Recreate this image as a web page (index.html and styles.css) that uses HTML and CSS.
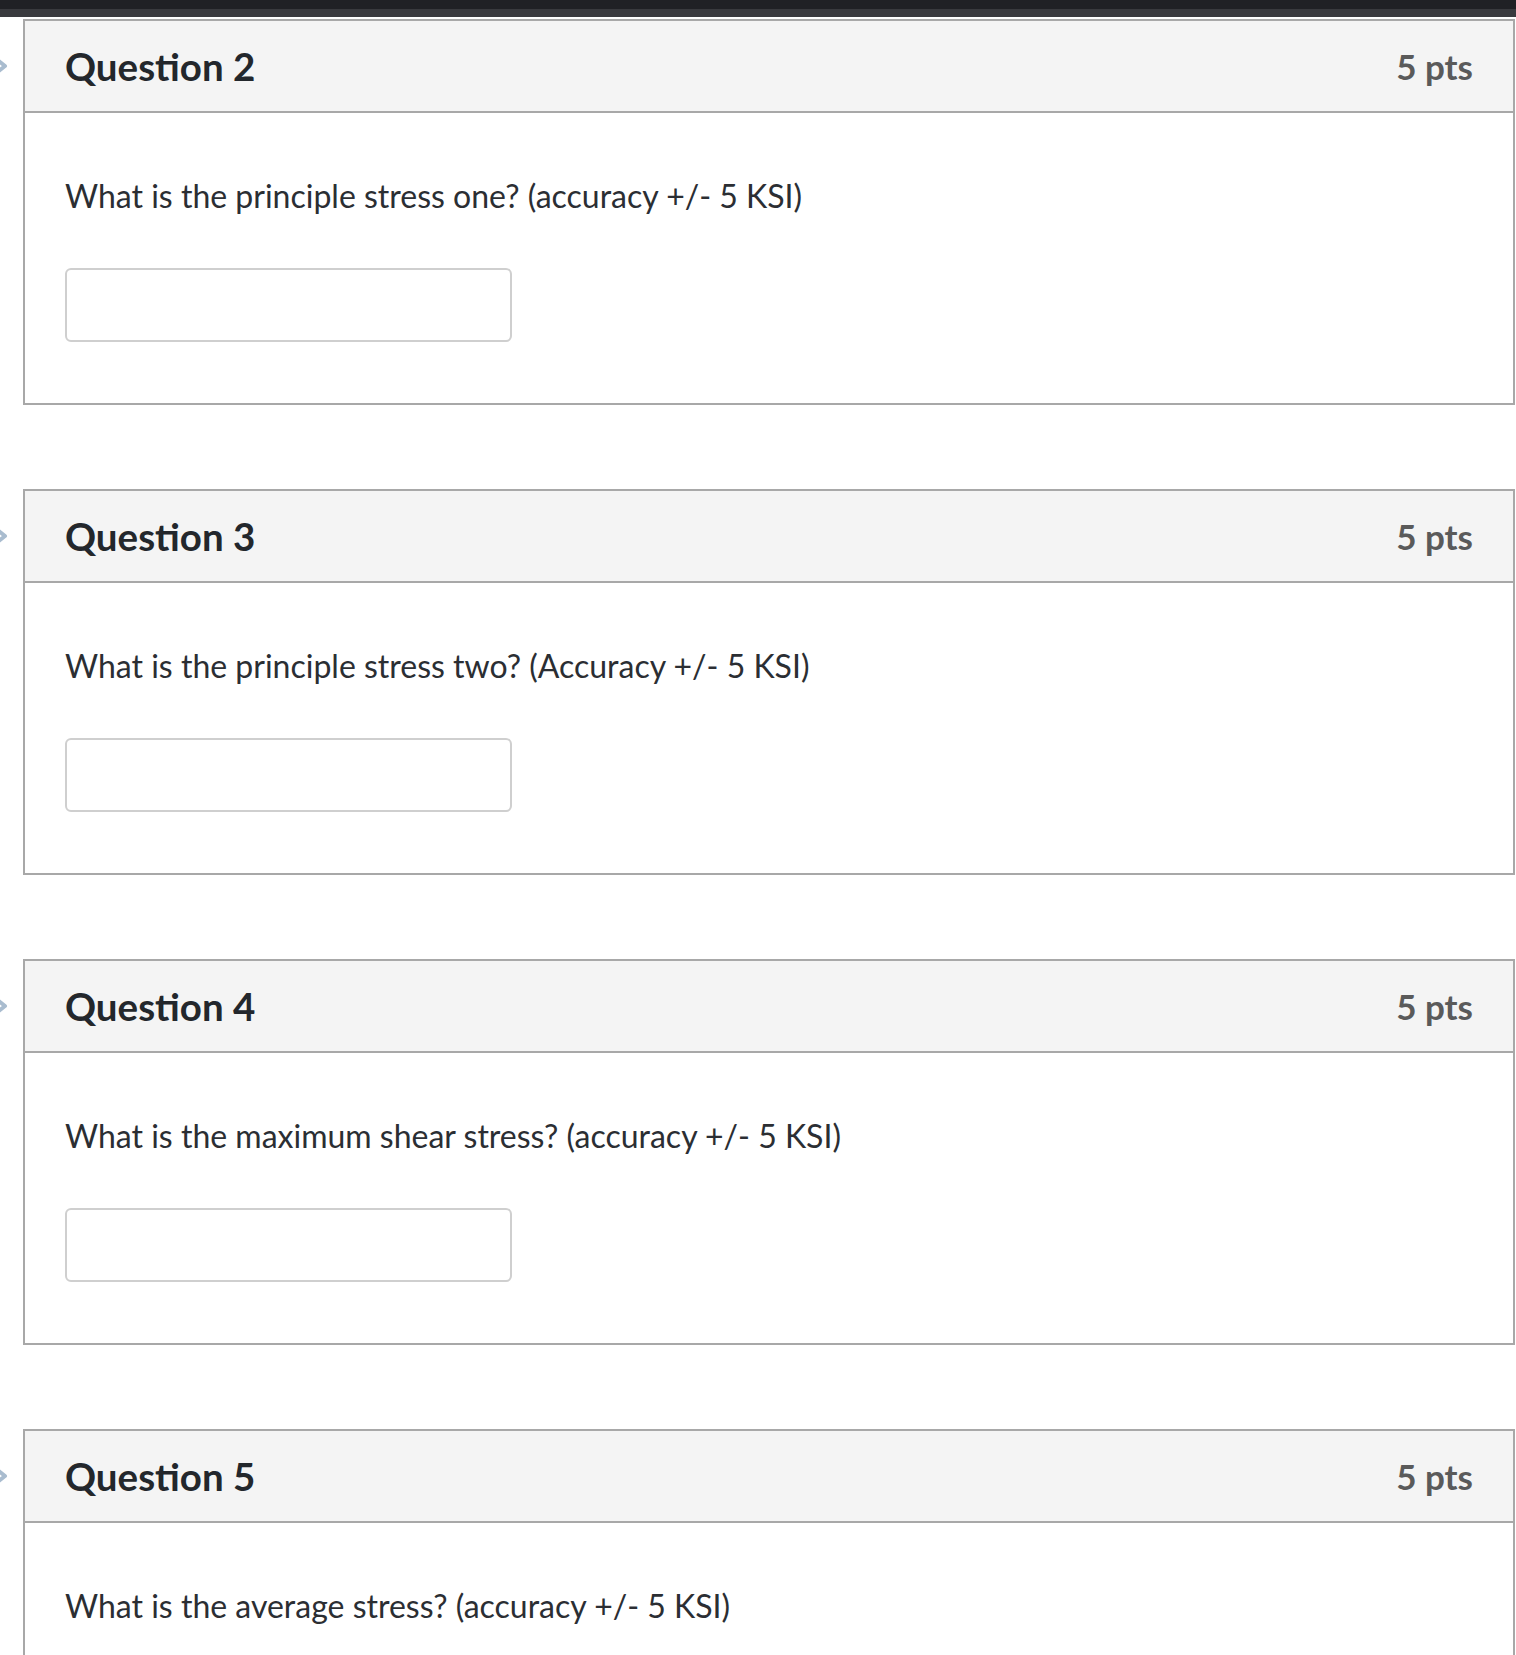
FILE: index.html
```html
<!DOCTYPE html>
<html lang="en">
<head>
<meta charset="utf-8">
<title>Quiz</title>
<link rel="stylesheet" href="styles.css">
</head>
<body>
<div class="topbar"><div class="topbar-dark"></div><div class="topbar-gray"></div></div>
<main class="quiz">
  <section class="question">
    <svg class="nav-arrow" width="20" height="24" viewBox="0 0 20 24"><polyline points="4,4 14,12 4,20" fill="none" stroke="#a9bccf" stroke-width="4" stroke-linecap="round" stroke-linejoin="round"/></svg>
    <header class="q-header"><h2 class="q-title">Question 2</h2><span class="q-pts">5 pts</span></header>
    <div class="q-body">
      <p class="q-text">What is the principle stress one? (accuracy +/- 5 KSI)</p>
      <input class="q-input" type="text" aria-label="answer">
    </div>
  </section>
  <section class="question">
    <svg class="nav-arrow" width="20" height="24" viewBox="0 0 20 24"><polyline points="4,4 14,12 4,20" fill="none" stroke="#a9bccf" stroke-width="4" stroke-linecap="round" stroke-linejoin="round"/></svg>
    <header class="q-header"><h2 class="q-title">Question 3</h2><span class="q-pts">5 pts</span></header>
    <div class="q-body">
      <p class="q-text">What is the principle stress two? (Accuracy +/- 5 KSI)</p>
      <input class="q-input" type="text" aria-label="answer">
    </div>
  </section>
  <section class="question">
    <svg class="nav-arrow" width="20" height="24" viewBox="0 0 20 24"><polyline points="4,4 14,12 4,20" fill="none" stroke="#a9bccf" stroke-width="4" stroke-linecap="round" stroke-linejoin="round"/></svg>
    <header class="q-header"><h2 class="q-title">Question 4</h2><span class="q-pts">5 pts</span></header>
    <div class="q-body">
      <p class="q-text">What is the maximum shear stress? (accuracy +/- 5 KSI)</p>
      <input class="q-input" type="text" aria-label="answer">
    </div>
  </section>
  <section class="question">
    <svg class="nav-arrow" width="20" height="24" viewBox="0 0 20 24"><polyline points="4,4 14,12 4,20" fill="none" stroke="#a9bccf" stroke-width="4" stroke-linecap="round" stroke-linejoin="round"/></svg>
    <header class="q-header"><h2 class="q-title">Question 5</h2><span class="q-pts">5 pts</span></header>
    <div class="q-body">
      <p class="q-text">What is the average stress? (accuracy +/- 5 KSI)</p>
      <input class="q-input" type="text" aria-label="answer">
    </div>
  </section>
</main>
</body>
</html>
```

FILE: styles.css
```css
html, body {
  margin: 0;
  padding: 0;
  background: #ffffff;
}
body {
  font-family: Lato, "Noto Sans", sans-serif;
  color: #2d3035;
  overflow: hidden;
  height: 1655px;
}
.topbar {
  display: flex;
  flex-direction: column;
}
.topbar-dark {
  height: 9px;
  background: #202125;
}
.topbar-gray {
  height: 8px;
  background: #393a3e;
}
.quiz {
  display: flex;
  flex-direction: column;
  gap: 84px;
  padding-top: 2px;
  margin-left: 23px;
  width: 1492px;
}
.question {
  position: relative;
  border: 2px solid #a8a8a8;
}
.nav-arrow {
  position: absolute;
  left: -34px;
  top: 33px;
}
.q-header {
  display: flex;
  align-items: center;
  justify-content: space-between;
  height: 90px;
  padding: 0 40px;
  background: #f4f4f4;
  border-bottom: 2px solid #a8a8a8;
}
.q-title {
  margin: 0;
  font-size: 38.5px;
  font-weight: 700;
  color: #23272c;
}
.q-pts {
  font-size: 35px;
  font-weight: 700;
  color: #5a5a5a;
}
.q-body {
  padding: 62px 40px 61px;
}
.q-text {
  margin: 0;
  font-size: 32px;
  line-height: 42px;
  color: #2b2e33;
}
.q-input {
  display: block;
  box-sizing: border-box;
  margin-top: 51px;
  width: 447px;
  height: 74px;
  border: 2px solid #cfcfcf;
  border-radius: 6px;
  background: #fff;
  padding: 0;
}
```
